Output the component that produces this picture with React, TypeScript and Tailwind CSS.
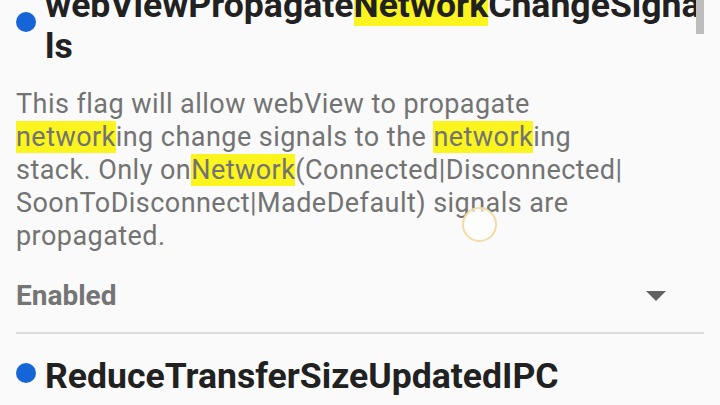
import React from "react";

const Mark = ({ children }: { children: React.ReactNode }) => (
  <mark className="bg-[#fbf41f] text-inherit">{children}</mark>
);

export default function App() {
  return (
    <div
      className="relative w-[720px] h-[405px] overflow-hidden bg-[#fafafa]"
      style={{ fontFamily: "Roboto, 'Noto Sans', sans-serif" }}
    >
      <div className="flex flex-col px-4 mt-[-15px]">
        {/* Title 1 */}
        <div className="flex items-start">
          <div className="mt-[27px] w-5 h-5 rounded-full bg-[#1565d8] shrink-0" />
          <div className="ml-[9px] text-[35.6px] leading-[41px] font-bold text-[#212121] whitespace-nowrap">
            <div>
              webViewPropagate<Mark>Network</Mark>ChangeSigna
            </div>
            <div>ls</div>
          </div>
        </div>

        {/* Description */}
        <div className="mt-[21px] text-[27px] leading-[33px] tracking-[0.45px] text-[#737373] whitespace-nowrap">
          <div>This flag will allow webView to propagate</div>
          <div>
            <Mark>network</Mark>ing change signals to the <Mark>network</Mark>ing
          </div>
          <div>
            stack. Only on<Mark>Network</Mark>(Connected|Disconnected|
          </div>
          <div>SoonToDisconnect|MadeDefault) signals are</div>
          <div>propagated.</div>
        </div>

        {/* Select */}
        <div className="mt-[26px] flex items-center justify-between h-[33px]">
          <span className="text-[28px] leading-[33px] font-bold text-[#757575]">Enabled</span>
          <svg width="20" height="10" viewBox="0 0 20 10" className="mr-[38px]">
            <path d="M0 0 H20 L10 10 Z" fill="#636363" />
          </svg>
        </div>

        <div className="mt-[20px] h-[2px] bg-[#dddddd]" />

        {/* Title 2 */}
        <div className="mt-[22px] flex items-start">
          <div className="mt-[7px] w-5 h-5 rounded-full bg-[#1565d8] shrink-0" />
          <div className="ml-[9px] text-[35.6px] leading-[41px] font-bold text-[#212121] whitespace-nowrap">
            ReduceTransferSizeUpdatedIPC
          </div>
        </div>
      </div>

      {/* Scrollbar */}
      <div className="absolute left-[696px] top-0 w-2 h-[34px] bg-[#bdbdbd]" />

      {/* Touch indicator */}
      <div className="absolute left-[462px] top-[207px] w-[35px] h-[35px] rounded-full border-2 border-[#f1dca6] bg-[#fdfdfb]/70" />
    </div>
  );
}
